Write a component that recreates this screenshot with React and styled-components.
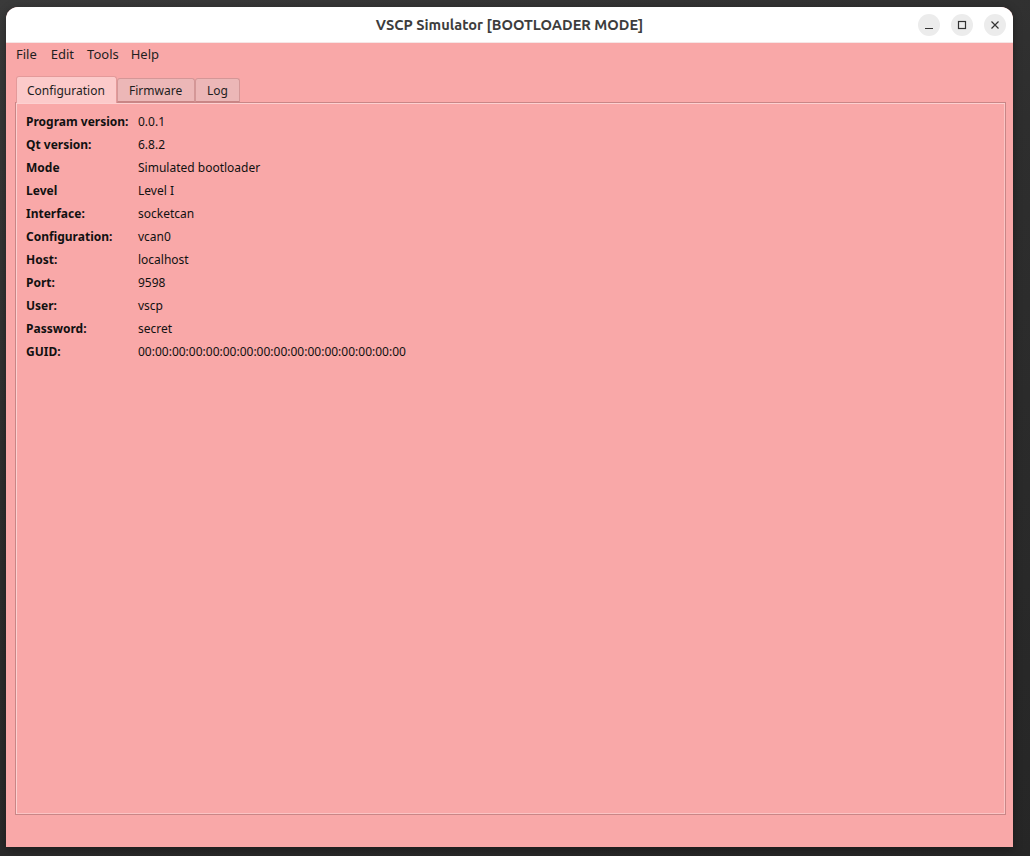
import React from "react";
import styled, { createGlobalStyle } from "styled-components";

const Global = createGlobalStyle`
  html, body { margin: 0; padding: 0; }
  body {
    width: 1030px; height: 856px; overflow: hidden;
    background: linear-gradient(160deg, #3a3a3a 0%, #2e2e2e 40%, #262626 100%);
    font-family: "Noto Sans", "DejaVu Sans", sans-serif;
  }
`;

const Desktop = styled.div`
  padding: 7px 0 0 6px;
`;

const Window = styled.div`
  width: 1007px;
  height: 840px;
  border-radius: 12px 12px 0 0;
  overflow: hidden;
  display: flex;
  flex-direction: column;
  background: #f9a8a8;
  box-shadow: 0 2px 10px rgba(0,0,0,0.35);
`;

const TitleBar = styled.div`
  height: 36px;
  flex: none;
  background: #ffffff;
  position: relative;
  display: flex;
  align-items: center;
  justify-content: flex-end;
  padding-right: 7px;
  gap: 11px;
  border-bottom: 1px solid #f6e6e6;
  box-sizing: border-box;
`;

const Title = styled.div`
  position: absolute;
  left: 0; right: 0; top: 0; bottom: 0;
  display: flex;
  align-items: center;
  justify-content: center;
  font-family: "Ubuntu", "Noto Sans", sans-serif;
  font-weight: 600;
  font-size: 14.6px;
  color: #3d3d3d;
  pointer-events: none;
`;

const WinButton = styled.div`
  width: 22px;
  height: 22px;
  border-radius: 50%;
  background: #ececec;
  display: flex;
  align-items: center;
  justify-content: center;
  position: relative;
  z-index: 1;
`;

const MenuBar = styled.div`
  height: 23px;
  flex: none;
  display: flex;
  align-items: center;
  padding-left: 10px;
  font-size: 13px;
  color: #1f1f1f;
`;

const MenuItem = styled.span`
  line-height: 23px;
  margin-right: ${p => p.$mr}px;
`;

const Body = styled.div`
  flex: 1;
  display: flex;
  flex-direction: column;
  padding: 10px 7px 32px 9px;
`;

const TabBar = styled.div`
  display: flex;
  align-items: flex-end;
  padding-left: 1px;
  height: 26px;
  flex: none;
  position: relative;
  z-index: 1;
`;

const Tab = styled.div`
  box-sizing: border-box;
  width: ${p => p.$w}px;
  height: ${p => (p.$active ? "27px" : "24px")};
  margin-bottom: ${p => (p.$active ? "-1px" : "0")};
  padding: 0 0 0 ${p => p.$pad}px;
  display: flex;
  align-items: center;
  font-size: 12px;
  color: #1e1e1e;
  background: ${p => (p.$active ? "#fccaca" : "#ecb7b7")};
  border: 1px solid ${p => (p.$active ? "#e49a9a" : "#d49797")};
  border-bottom: ${p => (p.$active ? "none" : "1px solid #c98585")};
  border-radius: 3px 3px 0 0;
  padding-top: ${p => (p.$active ? "0" : "1px")};
`;

const Panel = styled.div`
  flex: 1;
  box-sizing: border-box;
  border: 1px solid #c98686;
  box-shadow: inset 1px 1px 0 #fdd0d0, inset -1px -1px 0 #fbc4c4;
  padding: 7px 10px;
`;

const InfoGrid = styled.div`
  display: grid;
  grid-template-columns: 112px auto;
  justify-content: start;
  font-size: 12px;
  color: #111;
  line-height: 23px;
`;

const Label = styled.div`
  font-weight: 700;
`;

const Value = styled.div``;

const rows = [
  ["Program version:", "0.0.1"],
  ["Qt version:", "6.8.2"],
  ["Mode", "Simulated bootloader"],
  ["Level", "Level I"],
  ["Interface:", "socketcan"],
  ["Configuration:", "vcan0"],
  ["Host:", "localhost"],
  ["Port:", "9598"],
  ["User:", "vscp"],
  ["Password:", "secret"],
  ["GUID:", "00:00:00:00:00:00:00:00:00:00:00:00:00:00:00:00"],
];

export default function App() {
  return (
    <>
      <Global />
      <Desktop>
        <Window>
          <TitleBar>
            <Title>VSCP Simulator [BOOTLOADER MODE]</Title>
            <WinButton>
              <svg width="10" height="10" viewBox="0 0 10 10">
                <line x1="1" y1="8.5" x2="9" y2="8.5" stroke="#333" strokeWidth="1.2" />
              </svg>
            </WinButton>
            <WinButton>
              <svg width="10" height="10" viewBox="0 0 10 10">
                <rect x="1.5" y="1.5" width="7" height="7" fill="none" stroke="#333" strokeWidth="1.2" />
              </svg>
            </WinButton>
            <WinButton>
              <svg width="10" height="10" viewBox="0 0 10 10">
                <path d="M1.5 1.5 L8.5 8.5 M8.5 1.5 L1.5 8.5" stroke="#333" strokeWidth="1.2" />
              </svg>
            </WinButton>
          </TitleBar>
          <MenuBar>
            <MenuItem $mr={14}>File</MenuItem>
            <MenuItem $mr={13}>Edit</MenuItem>
            <MenuItem $mr={12}>Tools</MenuItem>
            <MenuItem $mr={0}>Help</MenuItem>
          </MenuBar>
          <Body>
            <TabBar>
              <Tab $active $w={101} $pad={10}>Configuration</Tab>
              <Tab $w={78} $pad={11}>Firmware</Tab>
              <Tab $w={45} $pad={11}>Log</Tab>
            </TabBar>
            <Panel>
              <InfoGrid>
                {rows.map(([l, v]) => (
                  <React.Fragment key={l}>
                    <Label>{l}</Label>
                    <Value>{v}</Value>
                  </React.Fragment>
                ))}
              </InfoGrid>
            </Panel>
          </Body>
        </Window>
      </Desktop>
    </>
  );
}
